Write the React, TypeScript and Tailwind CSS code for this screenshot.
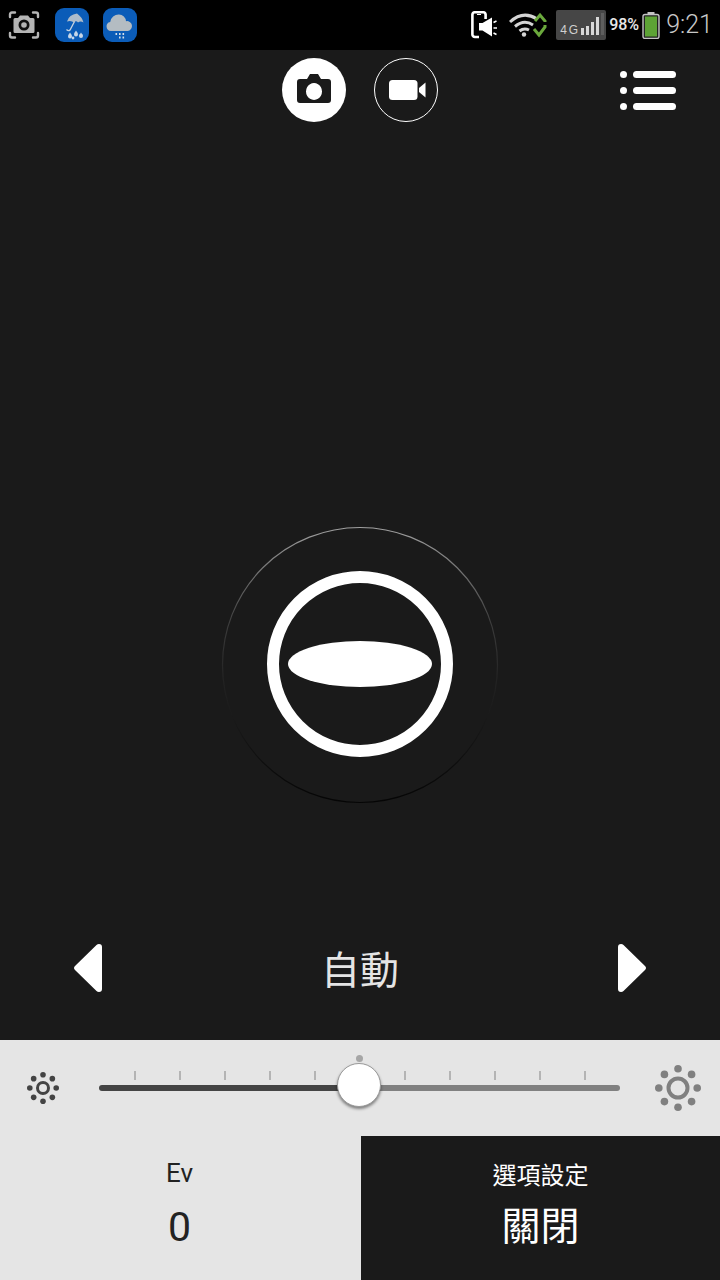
const cjk = "font-['Noto_Sans_CJK_TC','Noto_Sans_CJK_SC',sans-serif]";

function ScreenshotIcon() {
  return (
    <svg width="32" height="28" viewBox="0 0 32 28" fill="none">
      <path d="M2 6V3.5Q2 1.5 4 1.5H7M25 1.5h3Q30 1.5 30 3.5V6M2 22v2.5Q2 26.5 4 26.5H7M25 26.5h3Q30 26.5 30 24.5V22" stroke="#b5b5b5" strokeWidth="2.4" strokeLinecap="round" />
      <path d="M7 7h3l2-2.5h8L22 7h3a1.5 1.5 0 0 1 1.5 1.5v12A1.5 1.5 0 0 1 25 22H7a1.5 1.5 0 0 1-1.5-1.5v-12A1.5 1.5 0 0 1 7 7z" fill="#b5b5b5" />
      <circle cx="16" cy="14" r="5.5" fill="#111" />
      <circle cx="16" cy="14" r="2.8" fill="#b5b5b5" />
    </svg>
  );
}

function RainUmbrellaIcon() {
  return (
    <div className="flex h-[34px] w-[34px] items-center justify-center rounded-[9px] bg-[#0b5cb8]">
      <svg width="30" height="30" viewBox="0 0 30 30">
        <path d="M10 11.5Q12 4.5 20 3.5Q25 7 26.5 12.5Q23.5 10.5 21 12.5Q19 10 17 12.5Q14 10 10 11.5z" fill="#aebccb" />
        <path d="M17.5 11.5L13 20Q11.5 21.5 9.5 19.5" stroke="#c6d2df" strokeWidth="1.3" fill="none" />
        <g fill="#c6d6e8">
          <path d="M13 22.5l2 3h-4z" />
          <circle cx="13" cy="26.5" r="2" />
          <path d="M19 20.5l2 3h-4z" />
          <circle cx="19" cy="24.5" r="2" />
          <circle cx="16" cy="28" r="1.4" />
          <circle cx="24" cy="26" r="2" />
          <path d="M24 22.5l2 3h-4z" />
        </g>
      </svg>
    </div>
  );
}

function RainCloudIcon() {
  return (
    <div className="flex h-[34px] w-[34px] items-center justify-center rounded-[9px] bg-[#0b5cb8]">
      <svg width="30" height="30" viewBox="0 0 30 30">
        <path d="M6 21a4.6 4.6 0 0 1-.8-9.1A8.5 8.5 0 0 1 14 4.5a7 7 0 0 1 7 6.7A5 5 0 0 1 23 21z" fill="#b4bcc2" />
        <g fill="#d4dee8">
          <rect x="10.5" y="23" width="1.6" height="2" />
          <rect x="14" y="23" width="1.6" height="2" />
          <rect x="17.5" y="23" width="1.6" height="2" />
          <rect x="14" y="26.5" width="1.6" height="2" />
          <rect x="17.5" y="26.5" width="1.6" height="2" />
        </g>
      </svg>
    </div>
  );
}

function PhoneMuteIcon() {
  return (
    <svg width="26" height="28" viewBox="0 0 26 28" fill="none">
      <path d="M8 26H4a2.5 2.5 0 0 1-2.6-2.500V3.500A2.500 2.500 0 0 1 4 1.300h8A2.500 2.500 0 0 1 14.600 3.500V8" stroke="#fff" strokeWidth="2.6" />
      <rect x="6" y="3" width="4" height="1" fill="#fff" />
      <path d="M8 12h3.500L21 6.500v19l-9.500-6H8z" fill="#fff" />
      <path d="M22.500 11.500l3-1.500M22.500 17h3.500M22.500 22l3 1.500" stroke="#fff" strokeWidth="1.6" />
    </svg>
  );
}

function WifiIcon() {
  return (
    <svg width="38" height="26" viewBox="0 0 38 26" fill="none">
      <path d="M1 10Q14-2 28 7M6 14.500Q15 7 24 13M10.500 19Q15 15.500 20 18" stroke="#d4d4d4" strokeWidth="3" />
      <circle cx="15" cy="22.500" r="2.200" fill="#d4d4d4" />
      <path d="M26 9l5-6 5 6v1" stroke="#6aa83c" strokeWidth="3" />
      <path d="M36 13v2l-6 8-5-6" stroke="#6aa83c" strokeWidth="3" />
    </svg>
  );
}

function SignalBadge() {
  return (
    <div className="flex h-[30px] w-[50px] items-end rounded-[2px] bg-[#464646] pb-[5px] pl-[4px]">
      <span className="w-[19px] font-['Liberation_Sans',sans-serif] text-[12px] leading-[9px] tracking-[2px] text-[#d0d0d0]">4G</span>
      <div className="ml-[2px] flex items-end gap-[2px]">
        <div className="h-[7px] w-[3px] bg-[#d8d8d8]" />
        <div className="h-[9px] w-[3px] bg-[#d8d8d8]" />
        <div className="h-[13px] w-[3px] bg-[#d8d8d8]" />
        <div className="h-[18px] w-[3px] bg-[#d8d8d8]" />
        <div className="h-[22px] w-[3px] bg-[#5e5e5e]" />
      </div>
    </div>
  );
}

function BatteryIcon() {
  return (
    <svg width="18" height="27" viewBox="0 0 18 27">
      <rect x="5.500" y="0" width="7" height="3" fill="#c4c4c4" />
      <rect x="1" y="2.500" width="16" height="24" rx="2" fill="#222" stroke="#c4c4c4" strokeWidth="1.4" />
      <rect x="3" y="4.500" width="12" height="20" fill="#5da335" />
    </svg>
  );
}

function StatusBar() {
  return (
    <div className="flex h-[50px] items-center bg-black pl-[8px] pr-[7px]">
      <ScreenshotIcon />
      <div className="ml-[15px] mt-[-1px]"><RainUmbrellaIcon /></div>
      <div className="ml-[14px] mt-[-1px]"><RainCloudIcon /></div>
      <div className="ml-auto flex items-center">
        <PhoneMuteIcon />
        <div className="ml-[12px]"><WifiIcon /></div>
        <div className="ml-[9px]"><SignalBadge /></div>
        <span className="ml-[3px] font-['Roboto',sans-serif] text-[16px] font-medium text-[#e8e8e8]">98%</span>
        <div className="ml-[3px]"><BatteryIcon /></div>
        <span className="ml-[6px] font-['Roboto',sans-serif] text-[25px] font-light text-[#c8c8c8]">9:21</span>
      </div>
    </div>
  );
}

function ModeToolbar() {
  return (
    <div className="relative flex h-[80px] items-center justify-center gap-[28px]">
      <div className="flex h-[64px] w-[64px] items-center justify-center rounded-full bg-white">
        <svg width="34" height="29" viewBox="0 0 34 29" className="mt-[-3px]">
          <path fillRule="evenodd" fill="#1a1a1a" d="M3 5h7l3-5h8l3 5h7a3 3 0 0 1 3 3v18a3 3 0 0 1-3 3H3a3 3 0 0 1-3-3V8a3 3 0 0 1 3-3zM17 9a8 8.500 0 1 0 .01 0z" />
        </svg>
      </div>
      <div className="flex h-[64px] w-[64px] items-center justify-center rounded-full border border-white">
        <svg width="37" height="20" viewBox="0 0 37 20" fill="#fff" className="ml-[2px]">
          <rect width="28.500" height="20" rx="3.500" />
          <path d="M30 8l6.500-5.500v15L30 12z" />
        </svg>
      </div>
      {/* list icon sits over the toolbar's right edge */}
      <div className="absolute right-[44px] top-[21px] flex flex-col gap-[9px]">
        {[0, 1, 2].map((i) => (
          <div key={i} className="flex items-center gap-[6px]">
            <div className="h-[7px] w-[7px] rounded-full bg-white" />
            <div className="h-[7px] w-[43px] rounded-full bg-white" />
          </div>
        ))}
      </div>
    </div>
  );
}

function ShutterDial() {
  return (
    <svg width="278" height="278" viewBox="0 0 278 278" fill="none" className="mx-auto">
      <defs>
        <linearGradient id="rim" x1="0" y1="0" x2="0" y2="1">
          <stop offset="0" stopColor="#a0a0a0" />
          <stop offset="0.35" stopColor="#3c3c3c" />
          <stop offset="0.55" stopColor="#232323" />
          <stop offset="1" stopColor="#050505" />
        </linearGradient>
      </defs>
      <circle cx="139" cy="139" r="137.500" stroke="url(#rim)" strokeWidth="1.2" />
      <circle cx="139" cy="138" r="87" stroke="#fff" strokeWidth="12" />
      <ellipse cx="139" cy="138" rx="72" ry="23" fill="#fff" />
    </svg>
  );
}

function ModeSelector() {
  return (
    <div className="mt-[139px] flex h-[50px] items-center justify-between px-[74px]">
      <svg width="28" height="48" viewBox="0 0 28 48" fill="#fff">
        <path d="M28 3v42q0 3-3 3-1.500 0-2.500-1L1 26q-2-2 0-4L22.500 1q1-1 2.500-1 3 0 3 3z" />
      </svg>
      <span className={`${cjk} mt-[-2px] text-[39px] leading-none text-[#e4e4e4]`}>自動</span>
      <svg width="28" height="48" viewBox="0 0 28 48" fill="#fff">
        <path d="M0 3v42q0 3 3 3 1.500 0 2.500-1L27 26q2-2 0-4L5.500 1Q4.500 0 3 0 0 0 0 3z" />
      </svg>
    </div>
  );
}

function SunIcon({ size, color, ring, rays, stroke }: { size: number; color: string; ring: number; rays: number; stroke: number }) {
  const c = size / 2;
  const dist = c - rays;
  return (
    <svg width={size} height={size} viewBox={`0 0 ${size} ${size}`}>
      <circle cx={c} cy={c} r={ring} fill="none" stroke={color} strokeWidth={stroke} />
      {[0, 45, 90, 135, 180, 225, 270, 315].map((a) => (
        <circle
          key={a}
          cx={c + dist * Math.cos((a * Math.PI) / 180)}
          cy={c + dist * Math.sin((a * Math.PI) / 180)}
          r={rays}
          fill={color}
        />
      ))}
    </svg>
  );
}

function EvSlider() {
  const ticks = [135, 180, 225, 270, 315, 405, 450, 495, 540, 585];
  return (
    <div className="flex h-[96px] items-center bg-[#e5e5e5] pl-[27px]">
      <SunIcon size={32} color="#444444" ring={5.500} rays={2.800} stroke={3} />
      <div className="relative ml-[40px] h-full w-[521px]">
        <div className="absolute left-0 right-0 top-[45px] flex h-[6px]">
          <div className="w-[240px] rounded-l-full bg-[#444444]" />
          <div className="flex-1 rounded-r-full bg-[#808080]" />
        </div>
        {ticks.map((x) => (
          <div key={x} className="absolute top-[31px] h-[9px] w-[2px] bg-[#b4b4b4]" style={{ left: x - 100 }} />
        ))}
        <div className="absolute left-[257px] top-[15px] h-[7px] w-[7px] rounded-full bg-[#a6a6a6]" />
        <div className="absolute left-[238px] top-[23px] h-[44px] w-[44px] rounded-full border border-[#9a9a9a] bg-white shadow-[0_2px_3px_rgba(0,0,0,0.45)]" />
      </div>
      <div className="ml-[35px]">
        <SunIcon size={46} color="#808080" ring={9.500} rays={3.800} stroke={4} />
      </div>
    </div>
  );
}

function BottomPanels() {
  return (
    <div className="flex h-[144px]">
      <div className="flex w-[359px] flex-col items-center bg-[#e5e5e5] pt-[23px] text-[#222222]">
        <span className="font-['Roboto',sans-serif] text-[26px] leading-[29px]">Ev</span>
        <span className="mt-[14px] font-['Roboto',sans-serif] text-[41px] leading-[50px]">0</span>
      </div>
      <div className="w-[2px] bg-[#e5e5e5]" />
      <div className={`${cjk} flex flex-1 flex-col items-center bg-[#1a1a1a] pt-[23px] text-white`}>
        <span className="text-[24px] leading-[30px]">選項設定</span>
        <span className="mt-[9px] text-[39px] leading-[50px]">關閉</span>
      </div>
    </div>
  );
}

export default function App() {
  return (
    <div className="flex h-[1280px] w-[720px] flex-col overflow-hidden bg-[#1a1a1a]">
      <StatusBar />
      <ModeToolbar />
      <div className="flex-1 pt-[396px]">
        <ShutterDial />
        <ModeSelector />
      </div>
      <EvSlider />
      <BottomPanels />
    </div>
  );
}
